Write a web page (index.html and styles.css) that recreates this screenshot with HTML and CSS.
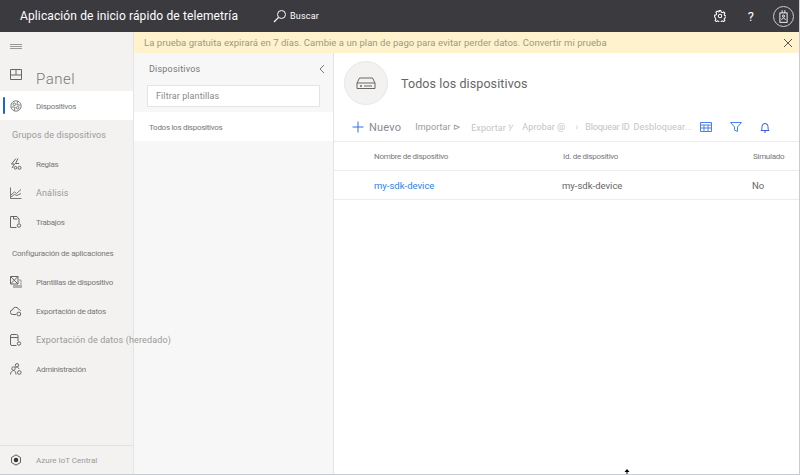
FILE: index.html
```html
<!DOCTYPE html>
<html>
<head>
  <title>Todos los dispositivos</title>
  <link rel="stylesheet" href="styles.css">
</head>
<body>
  <header class="topbar">
    <div class="app-title">Aplicación de inicio rápido de telemetría</div>
    <div class="search">
      <svg class="search-icon" width="14" height="14" viewBox="0 0 14 14"><circle cx="8.500" cy="5.500" r="4" fill="none" stroke="#fff"/><path d="M5.600 8.400L1 13" stroke="#fff" stroke-width="1.200"/></svg>
      <span>Buscar</span>
    </div>
    <div class="top-icons">
      <svg class="gear" width="12" height="12" viewBox="0 0 14 14"><circle cx="7" cy="7" r="2" fill="none" stroke="#fff" stroke-width="1.200"/><path d="M6 .7h2l.4 1.800 1.400.6 1.500-.9 1.400 1.400-.9 1.500.6 1.400 1.800.4v2l-1.800.4-.6 1.400.9 1.500-1.400 1.400-1.500-.9-1.400.6-.4 1.800H6l-.4-1.800-1.400-.6-1.500.9-1.400-1.400.9-1.500-.6-1.400L.7 8V6l1.800-.4.6-1.400-.9-1.500 1.400-1.400 1.500.9 1.400-.6z" fill="none" stroke="#fff" stroke-width="1.200"/></svg>
      <span class="help">?</span>
      <div class="avatar">
        <svg width="9" height="13" viewBox="0 0 10 14"><rect x="1" y="3" width="8" height="10.500" fill="none" stroke="#fff"/><path d="M3.500 0v3M6.500 0v3" stroke="#fff"/><circle cx="5" cy="6.500" r="1.200" fill="none" stroke="#fff"/><path d="M3 11c0-3 4-3 4 0" fill="none" stroke="#fff"/></svg>
      </div>
    </div>
  </header>

  <div class="layout">
    <nav class="sidebar">
      <div class="hamburger"><span></span><span></span><span></span></div>
      <div class="nav-item nav-panel">
        <svg class="nav-icon" width="12" height="12" viewBox="0 0 12 12"><path d="M.5.500h11v10H.5zM.5 6h11M6 .5V6" fill="none" stroke="#666"/></svg>
        <span class="panel-label">Panel</span>
      </div>
      <div class="nav-item active">
        <svg class="nav-icon" width="12" height="12" viewBox="0 0 14 14"><circle cx="7" cy="7" r="6" fill="none" stroke="#666"/><circle cx="5" cy="5" r="1.500" fill="none" stroke="#666"/><circle cx="9" cy="9" r="1.500" fill="none" stroke="#666"/><path d="M9 1.500L8 5.500l4 .5M5 12.500l1-4-4-.5" fill="none" stroke="#666"/></svg>
        <span class="tiny">Dispositivos</span>
      </div>
      <div class="nav-heading">Grupos de dispositivos</div>
      <div class="nav-item">
        <svg class="nav-icon" width="12" height="12" viewBox="0 0 12 12"><path d="M6 .5L1.500 6h3L2 10M8 .5L5.500 5.500H9" fill="none" stroke="#666"/><circle cx="5.500" cy="9.800" r="1.300" fill="none" stroke="#666"/><circle cx="9.500" cy="9.800" r="1.500" fill="none" stroke="#666"/></svg>
        <span class="tiny">Reglas</span>
      </div>
      <div class="nav-item">
        <svg class="nav-icon" width="12" height="12" viewBox="0 0 12 12"><path d="M.5.500v11h11M1 8l3.500-3 2 1.500L11 2.500M1 10l3.500-2.500 2.500 1 4-2" fill="none" stroke="#777"/></svg>
        <span class="soft">Análisis</span>
      </div>
      <div class="nav-item">
        <svg class="nav-icon" width="12" height="12" viewBox="0 0 12 12"><path d="M6.500 11.500H.5V.5h6.500L9 3v4" fill="none" stroke="#666"/><path d="M3.500.5v2.500h4" fill="none" stroke="#666"/><circle cx="9" cy="9.500" r="1.700" fill="none" stroke="#666"/></svg>
        <span class="tiny">Trabajos</span>
      </div>
      <div class="nav-heading tiny-heading">Configuración de aplicaciones</div>
      <div class="nav-item">
        <svg class="nav-icon" width="12" height="12" viewBox="0 0 12 12"><path d="M.5.500h7.500v7.500H.5zM.5 8L8 .5M.5.500L8 8" fill="none" stroke="#666"/><rect x="3" y="9" width="9" height="3" fill="#b0b0b0"/><path d="M9 4h2v5" fill="none" stroke="#999"/></svg>
        <span class="tiny">Plantillas de dispositivo</span>
      </div>
      <div class="nav-item">
        <svg class="nav-icon" width="12" height="12" viewBox="0 0 12 12"><path d="M6 9.500H2.800a2.300 2.300 0 0 1-.3-4.600 3.200 3.200 0 0 1 6.200-.4c.9 0 1.800.6 2 1.500" fill="none" stroke="#666"/><circle cx="8.800" cy="9" r="1.900" fill="none" stroke="#666"/></svg>
        <span class="tiny">Exportación de datos</span>
      </div>
      <div class="nav-item">
        <svg class="nav-icon" width="12" height="12" viewBox="0 0 12 12"><path d="M6.500 11.500H2A1.500 1.500 0 0 1 .5 10V2A1.500 1.500 0 0 1 2 .5h4.500A1.500 1.500 0 0 1 8 2v5M.5 3.500H8" fill="none" stroke="#666"/><circle cx="9" cy="9.500" r="1.700" fill="none" stroke="#666"/></svg>
        <span class="soft">Exportación de datos (heredado)</span>
      </div>
      <div class="nav-item">
        <svg class="nav-icon" width="12" height="12" viewBox="0 0 12 12"><circle cx="7" cy="2.300" r="1.700" fill="none" stroke="#666"/><circle cx="3.500" cy="5.500" r="1.700" fill="none" stroke="#666"/><circle cx="9.300" cy="9.500" r="1.800" fill="none" stroke="#666"/><path d="M.5 11.500c0-2.500 1.700-4 3-4s2.500 1.500 2.500 4M5 4.500c1-1 3-1 4 1.500" fill="none" stroke="#666"/></svg>
        <span class="tiny">Administración</span>
      </div>
      <div class="sidebar-footer">
        <svg class="nav-icon" width="12" height="12" viewBox="0 0 14 14"><path d="M7 1l5.200 3v6L7 13l-5.200-3V4z" fill="none" stroke="#444"/><circle cx="7" cy="7" r="2.600" fill="#333"/></svg>
        <span class="tiny footer-label">Azure IoT Central</span>
      </div>
    </nav>

    <div class="content">
      <div class="banner">
        <span>La prueba gratuita expirará en 7 días. Cambie a un plan de pago para evitar perder datos. Convertir mi prueba</span>
        <svg width="10" height="10" viewBox="0 0 10 10"><path d="M1 1l8 8M9 1l-8 8" stroke="#555"/></svg>
      </div>
      <div class="columns">
        <aside class="groups">
          <div class="groups-head">
            <span>Dispositivos</span>
            <svg width="6" height="10" viewBox="0 0 6 10"><path d="M5 1L1 5l4 4" fill="none" stroke="#777"/></svg>
          </div>
          <div class="filter">Filtrar plantillas</div>
          <div class="group-row tiny">Todos los dispositivos</div>
        </aside>

        <main class="main">
          <div class="page-head">
            <div class="page-icon">
              <svg width="20" height="12" viewBox="0 0 20 12"><path d="M3.500 1h13L19 6v5.500H1V6zM1 6h18" fill="none" stroke="#666"/><circle cx="5" cy="9" r="1" fill="#666"/><path d="M8 9h8" stroke="#666"/></svg>
            </div>
            <h1>Todos los dispositivos</h1>
          </div>
          <div class="toolbar">
            <button class="new-btn">
              <svg width="12" height="12" viewBox="0 0 12 12"><path d="M6 .5v11M.5 6h11" stroke="#2f6fed"/></svg>
              Nuevo
            </button>
            <span class="tool import">Importar ⊳</span>
            <span class="tool export">Exportar ⅟</span>
            <span class="tool approve">Aprobar @</span>
            <span class="tool sep">›</span>
            <span class="tool lock">Bloquear ID</span>
            <span class="tool">Desbloquear...</span>
            <div class="tool-icons">
              <svg width="12" height="10" viewBox="0 0 12 10"><path d="M.5.500h11v9H.5zM.5 3h11M4 3v6.500M8 3v6.500M.5 6h11" fill="none" stroke="#4a7fee"/></svg>
              <svg width="12" height="10" viewBox="0 0 12 10"><path d="M.5.500h11L7.500 5v4.500l-3-1.500V5z" fill="none" stroke="#4a7fee"/></svg>
              <svg width="10" height="11" viewBox="0 0 10 11"><path d="M1 8.500h8C8 7.500 8 6.500 8 4.500a3 3 0 0 0-6 0C2 6.500 2 7.500 1 8.500zM4 10h2" fill="none" stroke="#3f55ee"/></svg>
            </div>
          </div>
          <div class="table-row table-header tiny">
            <span class="col-name">Nombre de dispositivo</span>
            <span class="col-id">Id. de dispositivo</span>
            <span class="col-sim">Simulado</span>
          </div>
          <div class="table-row">
            <a class="col-name device-link">my-sdk-device</a>
            <span class="col-id">my-sdk-device</span>
            <span class="col-sim">No</span>
          </div>
        </main>
      </div>
    </div>
  </div>
  <svg class="cursor" width="6" height="6" viewBox="0 0 6 6"><path d="M3 0L.5 3h2v3h1V3h2z" fill="#000"/></svg>
</body>
</html>
```

FILE: styles.css
```css
* {
  box-sizing: border-box;
}

body {
  margin: 0;
  height: 475px;
  overflow: hidden;
  font-family: Roboto, sans-serif;
  font-size: 9px;
  color: #666;
  background: #fff;
  border-right: 1px solid #c8ccd2;
  border-bottom: 1px solid #c8ccd2;
  position: relative;
}

.topbar {
  height: 32px;
  background: #3b3a3f;
  color: #fff;
  display: flex;
  align-items: center;
}

.app-title {
  width: 265px;
  padding-left: 20px;
  font-size: 12px;
  letter-spacing: 0.12px;
  white-space: nowrap;
}

.search {
  display: flex;
  align-items: center;
  gap: 3px;
  padding-left: 8px;
  font-size: 9px;
  letter-spacing: 0.2px;
}

.top-icons {
  margin-left: auto;
  display: flex;
  align-items: center;
  padding-right: 5px;
}

.gear {
  margin-right: 22px;
}

.help {
  font-size: 13px;
  margin-right: 19px;
}

.avatar {
  width: 21px;
  height: 21px;
  border: 1px solid #ccc;
  border-radius: 50%;
  display: flex;
  align-items: center;
  justify-content: center;
}

.layout {
  display: flex;
  height: 442px;
}

.sidebar {
  width: 134px;
  flex: none;
  background: #f3f2f1;
  border-right: 1px solid #e4e4e4;
  display: flex;
  flex-direction: column;
  position: relative;
  z-index: 1;
}

.hamburger {
  height: 27px;
  padding: 12px 0 0 10px;
}

.hamburger span {
  display: block;
  width: 12px;
  height: 1px;
  background: #999;
  margin-bottom: 1px;
}

.nav-item {
  height: 29px;
  display: flex;
  align-items: center;
  padding-left: 10px;
  white-space: nowrap;
}

.nav-icon {
  flex: none;
  margin-right: 14px;
}

.nav-panel {
  height: 32px;
  align-items: flex-start;
  padding-top: 10px;
}

.panel-label {
  font-size: 15px;
  font-weight: 300;
  color: #777;
  line-height: 20px;
  letter-spacing: 0.5px;
}

.nav-item.active {
  background: #fff;
  position: relative;
}

.nav-item.active::before {
  content: "";
  position: absolute;
  left: 3px;
  top: 6px;
  width: 2px;
  height: 17px;
  border-radius: 1px;
  background: #1f5fe0;
}

.tiny {
  font-size: 8px;
  letter-spacing: -0.28px;
  padding-top: 1px;
  color: #777;
}

.soft {
  font-size: 9px;
  letter-spacing: 0.13px;
  padding-top: 1px;
  color: #999;
}

.nav-heading {
  height: 29px;
  padding-left: 12px;
  display: flex;
  align-items: center;
  font-size: 9px;
  letter-spacing: 0.12px;
  color: #999;
  white-space: nowrap;
}

.tiny-heading {
  height: 29px;
  margin-top: 2px;
  padding-top: 1px;
  font-size: 8px;
  letter-spacing: -0.2px;
  color: #777;
}

.sidebar-footer {
  margin-top: auto;
  height: 29px;
  border-top: 1px solid #e1e1e1;
  display: flex;
  align-items: center;
  padding-left: 10px;
}

.footer-label {
  letter-spacing: 0;
  color: #999;
}

.content {
  flex: 1;
  display: flex;
  flex-direction: column;
  min-width: 0;
}

.banner {
  height: 21px;
  flex: none;
  background: #fff2cc;
  color: #9a9a88;
  font-size: 9.500px;
  letter-spacing: 0.04px;
  display: flex;
  align-items: center;
  justify-content: space-between;
  padding: 0 6px 0 10px;
}

.columns {
  flex: 1;
  display: flex;
  min-height: 0;
}

.groups {
  width: 200px;
  flex: none;
  background: #f7f7f7;
  border-right: 1px solid #e4e4e4;
}

.groups-head {
  height: 31px;
  margin-bottom: 1px;
  padding: 0 8px 0 15px;
  display: flex;
  align-items: center;
  justify-content: space-between;
  font-size: 9px;
  letter-spacing: 0.2px;
  color: #777;
}

.filter {
  height: 22px;
  margin: 0 13px;
  padding-left: 8px;
  background: #fff;
  border: 1px solid #e4e4e4;
  display: flex;
  align-items: center;
  font-size: 9px;
  letter-spacing: 0.1px;
  color: #888;
}

.group-row {
  margin-top: 5px;
  height: 29px;
  background: #fff;
  padding-left: 15px;
  display: flex;
  align-items: center;
}

.main {
  flex: 1;
  min-width: 0;
  background: #fff;
}

.page-head {
  height: 60px;
  display: flex;
  align-items: center;
  padding: 0 0 0 10px;
}

.page-icon {
  width: 44px;
  height: 44px;
  border-radius: 50%;
  background: #f3f2f1;
  border: 1px solid #e8e8e8;
  display: flex;
  align-items: center;
  justify-content: center;
  margin-right: 13px;
}

h1 {
  margin: 0;
  font-size: 12.500px;
  font-weight: 400;
  letter-spacing: 0.1px;
  color: #666;
}

.toolbar {
  height: 28px;
  display: flex;
  align-items: center;
  padding-left: 18px;
  white-space: nowrap;
}

.new-btn {
  background: none;
  border: 0;
  padding: 0;
  font-family: inherit;
  font-size: 11px;
  letter-spacing: 0.2px;
  color: #8a8a96;
  display: flex;
  align-items: center;
  gap: 5px;
  margin-right: 14px;
}

.tool {
  font-size: 9px;
  letter-spacing: 0.1px;
  color: #c4c4c4;
  margin-right: 8px;
}

.import {
  color: #999;
  margin-right: 10px;
}

.export {
  margin-right: 10px;
}

.approve {
  margin-right: 10px;
}

.sep {
  margin-right: 7px;
}

.lock {
  letter-spacing: -0.2px;
  margin-right: 4px;
}

.tool-icons {
  margin-left: auto;
  display: flex;
  align-items: center;
  gap: 18px;
  padding-right: 32px;
}

.table-row {
  height: 29px;
  display: flex;
  align-items: center;
  border-bottom: 1px solid #ececec;
  font-size: 9.500px;
  color: #666;
}

.table-header {
  border-top: 1px solid #ececec;
  height: 30px;
  padding-top: 1px;
  font-size: 8px;
  letter-spacing: -0.28px;
  color: #777;
}

.col-name {
  width: 229px;
  padding-left: 40px;
}

.table-row:not(.table-header) .col-name {
  width: 228px;
}

.col-id {
  width: 190px;
}

.device-link {
  color: #2f7fed;
}

.cursor {
  position: absolute;
  left: 624px;
  top: 469px;
}
```
